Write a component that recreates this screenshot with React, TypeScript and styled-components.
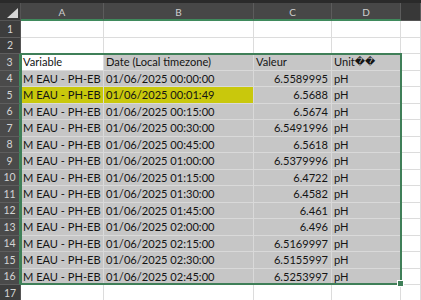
import React from 'react';
import styled, { createGlobalStyle } from 'styled-components';

const GlobalStyle = createGlobalStyle`
  html, body {
    margin: 0;
    padding: 0;
    background: #ffffff;
    overflow: hidden;
  }
  body {
    font-family: Lato, "DejaVu Sans", sans-serif;
  }
`;

const ROW_H = 16.5;

const Wrapper = styled.div`
  position: relative;
  width: 421px;
  height: 300px;
  overflow: hidden;
  background: #ffffff;
`;

const TopStrip = styled.div`
  height: 3px;
  background: #2a2a2a;
`;

const Grid = styled.div`
  display: grid;
  grid-template-columns: 21px 83px 150px 78px 69px 1fr;
  grid-template-rows: 18px repeat(17, ${ROW_H}px);
`;

const Corner = styled.div`
  position: relative;
  background: #393939;
  border-right: 1px solid #555;
  border-bottom: 1px solid #555;
  box-sizing: border-box;

  &::after {
    content: '';
    position: absolute;
    right: 2px;
    bottom: 2px;
    width: 0;
    height: 0;
    border-left: 11px solid transparent;
    border-bottom: 10px solid #d6d6d6;
  }
`;

const ColHead = styled.div<{ $selected?: boolean }>`
  display: flex;
  align-items: center;
  justify-content: center;
  box-sizing: border-box;
  background: ${p => (p.$selected ? '#474747' : '#383838')};
  border-right: 1px solid #5c5c5c;
  border-bottom: ${p => (p.$selected ? '2px solid #3f8a5c' : '1px solid #555')};
  color: #cfcfcf;
  font-size: 10px;
  padding-top: ${p => (p.$selected ? '1px' : '0')};
`;

const RowHead = styled.div<{ $selected?: boolean }>`
  display: flex;
  align-items: center;
  justify-content: center;
  box-sizing: border-box;
  background: ${p => (p.$selected ? '#4a4a4a' : '#3d3d3d')};
  border-bottom: 1px solid #5e5e5e;
  border-right: ${p => (p.$selected ? '2px solid #3f8a5c' : '1px solid #555')};
  color: #d4d4d4;
  font-size: 10.5px;
`;

type Fill = 'white' | 'sel' | 'yellow';

const fills: Record<Fill, string> = {
  white: '#ffffff',
  sel: '#c6c6c6',
  yellow: '#c9c80c',
};

const lines: Record<Fill, string> = {
  white: '#dcdcdc',
  sel: '#d9d9d9',
  yellow: '#d9d9d9',
};

const Cell = styled.div<{ $fill: Fill; $align?: 'left' | 'right' }>`
  display: flex;
  align-items: center;
  justify-content: ${p => (p.$align === 'right' ? 'flex-end' : 'flex-start')};
  box-sizing: border-box;
  padding: 0 3px 0 2px;
  background: ${p => fills[p.$fill]};
  border-right: 1px solid ${p => lines[p.$fill]};
  border-bottom: 1px solid ${p => lines[p.$fill]};
  color: #141414;
  font-size: 11.1px;
  white-space: nowrap;
  overflow: hidden;
`;

const Bad = styled.span`
  font-family: "DejaVu Sans", sans-serif;
  font-size: 10px;
`;

const Selection = styled.div`
  position: absolute;
  left: 20px;
  top: 53px;
  width: 382px;
  height: 232px;
  box-sizing: border-box;
  border: 2px solid #3f7f58;
  pointer-events: none;

  &::after {
    content: '';
    position: absolute;
    right: -4px;
    bottom: -4px;
    width: 5px;
    height: 5px;
    background: #3f7f58;
    border: 1px solid #ffffff;
  }
`;

const times = [
  '00:00:00', '00:01:49', '00:15:00', '00:30:00', '00:45:00', '01:00:00', '01:15:00',
  '01:30:00', '01:45:00', '02:00:00', '02:15:00', '02:30:00', '02:45:00',
];

const values = [
  '6.5589995', '6.5688', '6.5674', '6.5491996', '6.5618', '6.5379996', '6.4722',
  '6.4582', '6.461', '6.496', '6.5169997', '6.5155997', '6.5253997',
];

const App: React.FC = () => {
  const rows: React.ReactNode[] = [];

  for (let r = 1; r <= 17; r++) {
    const selected = r >= 3 && r <= 16;
    rows.push(<RowHead key={`h${r}`} $selected={selected}>{r}</RowHead>);

    if (r === 3) {
      rows.push(
        <Cell key="a3" $fill="white">Variable</Cell>,
        <Cell key="b3" $fill="sel">Date (Local timezone)</Cell>,
        <Cell key="c3" $fill="sel">Valeur</Cell>,
        <Cell key="d3" $fill="sel">Unit<Bad>{'\uFFFD\uFFFD'}</Bad></Cell>,
        <Cell key="e3" $fill="white" />,
      );
    } else if (selected) {
      const i = r - 4;
      const ab: Fill = r === 5 ? 'yellow' : 'sel';
      rows.push(
        <Cell key={`a${r}`} $fill={ab}>M EAU - PH-EB</Cell>,
        <Cell key={`b${r}`} $fill={ab}>01/06/2025 {times[i]}</Cell>,
        <Cell key={`c${r}`} $fill="sel" $align="right">{values[i]}</Cell>,
        <Cell key={`d${r}`} $fill="sel">pH</Cell>,
        <Cell key={`e${r}`} $fill="white" />,
      );
    } else {
      ['a', 'b', 'c', 'd', 'e'].forEach(c => {
        rows.push(<Cell key={`${c}${r}`} $fill="white" />);
      });
    }
  }

  return (
    <>
      <GlobalStyle />
      <Wrapper>
        <TopStrip />
        <Grid>
          <Corner />
          <ColHead $selected>A</ColHead>
          <ColHead $selected>B</ColHead>
          <ColHead $selected>C</ColHead>
          <ColHead $selected>D</ColHead>
          <ColHead />
          {rows}
        </Grid>
        <Selection />
      </Wrapper>
    </>
  );
};

export default App;
